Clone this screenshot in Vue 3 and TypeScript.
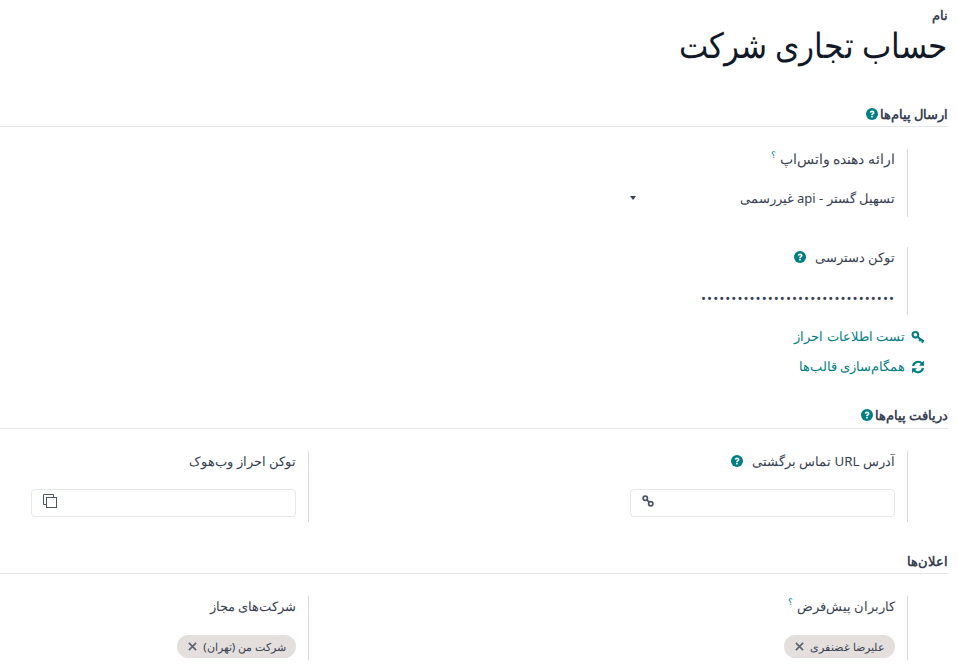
<script setup lang="ts">
interface Chip { text: string }
const users: Chip[] = [{ text: 'علیرضا غضنفری' }]
const companies: Chip[] = [{ text: 'شرکت من (تهران)' }]
const helpPath = 'M5 6.100C5.200 4.400 6.500 3.300 8.200 3.300c1.800 0 3.100 1.100 3.100 2.700 0 1.300-.8 2-1.600 2.500-.6.4-.7.6-.7 1.200H6.900c0-1.300.3-1.900 1.200-2.500.6-.4.8-.6.8-1 0-.5-.3-.8-.8-.8-.6 0-.9.4-1 1zM6.900 10.500h2.100v2.100H6.900z'
const dots = '•'.repeat(32)
</script>

<template>
  <div class="page" dir="rtl">
    <header class="head">
      <div class="name-label">نام</div>
      <h1 class="title">حساب تجاری شرکت</h1>
    </header>

    <section class="sec sec-send">
      <h2 class="sec-title nudge">
        <span>ارسال پیام‌ها</span>
        <svg class="help" viewBox="0 0 16 16"><circle cx="8" cy="8" r="8" /><path :d="helpPath" /></svg>
      </h2>
      <div class="row-one">
        <div class="field f-provider">
          <div class="label">ارائه دهنده واتس‌اپ <sup class="q">؟</sup></div>
          <div class="select">
            <span>تسهیل گستر - api غیررسمی</span>
            <i class="caret"></i>
          </div>
        </div>
      </div>
      <div class="row-one">
        <div class="field f-token">
          <div class="label tight">توکن دسترسی
            <svg class="help help-label" viewBox="0 0 16 16"><circle cx="8" cy="8" r="8" /><path :d="helpPath" /></svg>
          </div>
          <div class="dots">{{ dots }}</div>
        </div>
      </div>
      <div class="actions">
        <a class="action act-test">
          <svg class="a-icon" viewBox="0 0 16 16"><circle cx="5" cy="5.500" r="3.200" /><path d="M7.500 8l7 5M11 10.500l-1.600 2.200M13.800 12.500l-1.400 2" /></svg>
          <span>تست اطلاعات احراز</span>
        </a>
        <a class="action act-sync">
          <svg class="a-icon" viewBox="0 0 16 16"><path d="M2.300 6.800A5.900 5.900 0 0 1 12.500 4" /><path d="M13.700 9.200A5.900 5.900 0 0 1 3.500 12" /><path class="fill" d="M14.800 .8v5.700H9.100zM1.200 15.200V9.500h5.700z" /></svg>
          <span>همگام‌سازی قالب‌ها</span>
        </a>
      </div>
    </section>

    <section class="sec sec-recv">
      <h2 class="sec-title">
        <span>دریافت پیام‌ها</span>
        <svg class="help" viewBox="0 0 16 16"><circle cx="8" cy="8" r="8" /><path :d="helpPath" /></svg>
      </h2>
      <div class="grid">
        <div class="field f-input">
          <div class="label mid">آدرس URL تماس برگشتی
            <svg class="help help-label" viewBox="0 0 16 16"><circle cx="8" cy="8" r="8" /><path :d="helpPath" /></svg>
          </div>
          <div class="box">
            <svg class="box-icon link" viewBox="0 0 14 14"><circle cx="3.800" cy="3.800" r="2.500" /><circle cx="10.200" cy="10.200" r="2.500" /><path d="M5.500 5.500l3 3" /></svg>
          </div>
        </div>
        <div class="field f-input">
          <div class="label narrow">توکن احراز وب‌هوک</div>
          <div class="box">
            <svg class="box-icon copy" viewBox="0 0 14 14"><path d="M3.500 10.500H.5V.5h10v3" /><rect x="3.500" y="3.500" width="10" height="10" /></svg>
          </div>
        </div>
      </div>
    </section>

    <section class="sec sec-notif">
      <h2 class="sec-title nudge"><span>اعلان‌ها</span></h2>
      <div class="grid">
        <div class="field f-chip">
          <div class="label mid">کاربران پیش‌فرض <sup class="q">؟</sup></div>
          <div class="chips">
            <span v-for="c in users" :key="c.text" class="chip chip-user">
              <span>{{ c.text }}</span>
              <svg class="x" viewBox="0 0 10 10"><path d="M1 1l8 8M9 1l-8 8" /></svg>
            </span>
          </div>
        </div>
        <div class="field f-chip">
          <div class="label mid">شرکت‌های مجاز</div>
          <div class="chips">
            <span v-for="c in companies" :key="c.text" class="chip chip-co">
              <span>{{ c.text }}</span>
              <svg class="x" viewBox="0 0 10 10"><path d="M1 1l8 8M9 1l-8 8" /></svg>
            </span>
          </div>
        </div>
      </div>
    </section>
  </div>
</template>

<style>
html, body { margin: 0; background: #fff; overflow: hidden; }
</style>

<style scoped>
.page {
  width: 958px;
  height: 672px;
  overflow: hidden;
  font-family: "Noto Sans", Roboto, sans-serif;
  font-size: 14px;
  color: #374151;
  background: #fff;
}
.head { padding: 8px 10px 0 0; height: 82px; box-sizing: border-box; }
.name-label { font-size: 12.5px; font-weight: 600; line-height: 16px; color: #374151; }
.title {
  margin: 0;
  font-size: 35px;
  font-weight: 400;
  line-height: 42px;
  color: #111827;
  white-space: nowrap;
  transform: scaleX(.89);
  transform-origin: right center;
}
.sec-title {
  margin: 0 10px 0 0;
  height: 26px;
  display: flex;
  align-items: center;
  gap: 2px;
  font-size: 12.8px;
  font-weight: 700;
  color: #374151;
  border-bottom: 1px solid #e5e7eb;
}
.nudge { height: 24px; padding-top: 2px; }
.sec-send { padding-top: 18px; }
.help { width: 12px; height: 12px; flex: none; }
.help circle { fill: #017e84; }
.help path { fill: #fff; }
.help-label { margin-right: 5px; vertical-align: -1px; }
.row-one { margin-right: 50px; margin-top: 22px; display: flex; }
.row-one + .row-one { margin-top: 30px; }
.field { border-right: 1px solid #d8dadd; padding-right: 12px; box-sizing: border-box; }
.f-provider, .f-token { width: 599px; height: 68px; }
.label { font-size: 14px; line-height: 20px; color: #374151; }
.narrow { font-size: 13px; }
.tight { font-size: 12.7px; }
.mid { font-size: 13.3px; }
.q { font-size: 9px; color: #017e84; vertical-align: 6px; line-height: 0; }
.select {
  width: 265px;
  display: flex;
  justify-content: space-between;
  align-items: center;
  margin-top: 19px;
  line-height: 20px;
  font-size: 13px;
}
.caret {
  width: 0; height: 0;
  border-top: 4px solid #374151;
  border-left: 3px solid transparent;
  border-right: 3px solid transparent;
}
.dots { margin-top: 22px; line-height: 20px; font-family: Roboto, sans-serif; font-size: 15px; letter-spacing: 1px; color: #374151; }
.actions { margin-top: 11px; padding-right: 33px; display: flex; flex-direction: column; gap: 9px; }
.action {
  display: flex; align-items: center; gap: 6px;
  color: #017e84; font-weight: 500; line-height: 21px;
}
.act-test { font-size: 12.7px; }
.act-sync { font-size: 13px; }
.a-icon { width: 14px; height: 14px; fill: none; stroke: #017e84; stroke-width: 2.400; }
.a-icon .fill { fill: #017e84; stroke: none; }
.sec-recv { padding-top: 25px; }
.sec-notif { padding-top: 25px; }
.grid {
  display: grid;
  grid-template-columns: 599px 309px;
  margin-right: 50px;
  margin-top: 22px;
}
.f-input { height: 71px; }
.f-chip { height: 64px; }
.box {
  width: 265px;
  height: 28px;
  margin-top: 18px;
  border: 1px solid #e5e7eb;
  border-radius: 4px;
  box-sizing: border-box;
  display: flex;
  justify-content: flex-end;
  padding: 4px 11px;
}
.box-icon { fill: none; stroke: #4b5563; }
.link { width: 12px; height: 12px; stroke-width: 2; margin-top: 1px; }
.copy { width: 14px; height: 14px; stroke-width: 1; }
.chips { display: flex; margin-top: 19px; }
.chip {
  display: inline-flex;
  align-items: center;
  height: 23px;
  padding: 0 10px 0 11px;
  border-radius: 12px;
  background: #e4dedd;
  color: #374151;
  gap: 6px;
}
.chip-user { font-size: 11px; }
.chip-co { font-size: 11.4px; }
.x { width: 9px; height: 9px; fill: none; stroke: #5b6470; stroke-width: 1.800; }
</style>
